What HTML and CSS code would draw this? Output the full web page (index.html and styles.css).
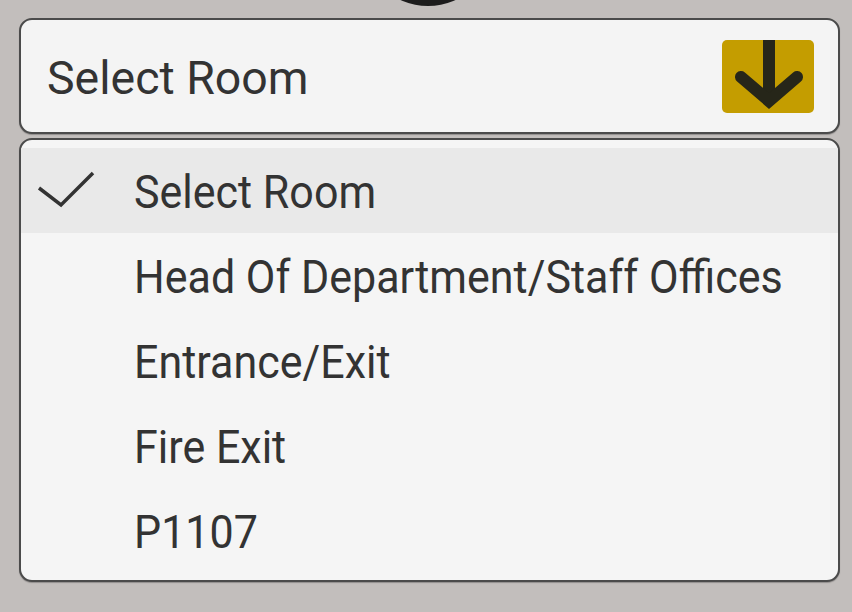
FILE: index.html
```html
<!DOCTYPE html>
<html>
<head>
<meta charset="utf-8">
<link rel="stylesheet" href="styles.css">
</head>
<body>
<div class="screen">
  <div class="top-strip"><div class="knob"></div></div>
  <div class="select">
    <span class="select-label">Select Room</span>
    <div class="select-btn">
      <svg width="92" height="73" viewBox="0 0 92 73">
        <path d="M47 0 V58" stroke="#262619" stroke-width="12" fill="none"/>
        <path d="M19 37 L47 61 L75 37" stroke="#262619" stroke-width="12" fill="none" stroke-linecap="round" stroke-linejoin="miter"/>
      </svg>
    </div>
  </div>
  <div class="menu">
    <div class="item selected">
      <span class="check">
        <svg width="60" height="40" viewBox="0 0 60 40">
          <path d="M2 17 L24 34 L56 2" stroke="#333" stroke-width="3.5" fill="none"/>
        </svg>
      </span>
      <span class="label">Select Room</span>
    </div>
    <div class="item"><span class="check"></span><span class="label">Head Of Department/Staff Offices</span></div>
    <div class="item"><span class="check"></span><span class="label">Entrance/Exit</span></div>
    <div class="item"><span class="check"></span><span class="label">Fire Exit</span></div>
    <div class="item"><span class="check"></span><span class="label">P1107</span></div>
  </div>
</div>
</body>
</html>
```
FILE: styles.css
```css
html, body {
  margin: 0;
  padding: 0;
}
body {
  background: #c2bebc;
  width: 852px;
  height: 612px;
  overflow: hidden;
  font-family: Roboto, "Noto Sans", sans-serif;
  color: #333;
}
.screen {
  display: flex;
  flex-direction: column;
}
.top-strip {
  height: 18px;
  display: flex;
  justify-content: center;
  overflow: hidden;
}
.knob {
  width: 132px;
  height: 132px;
  border-radius: 50%;
  background: #1c1c1c;
  margin-top: -126px;
  margin-left: 4px;
  flex: none;
}
.select {
  margin: 0 12px 0 19px;
  height: 116px;
  box-sizing: border-box;
  border: 2px solid #4b4b4b;
  border-radius: 13px;
  background: #f4f4f4;
  display: flex;
  align-items: center;
  justify-content: space-between;
  padding: 0 24px 0 26px;
  box-shadow: 0 1px 1px rgba(0,0,0,0.25);
}
.select-label {
  font-size: 46px;
  transform: scaleX(1.01);
  transform-origin: left center;
  margin-top: 4px;
}
.select-btn {
  width: 92px;
  height: 73px;
  background: #c49d00;
  border-radius: 5px;
  margin-top: 1px;
  display: flex;
}
.menu {
  margin: 4px 12px 0 19px;
  height: 444px;
  box-sizing: border-box;
  border: 2px solid #4b4b4b;
  border-radius: 13px;
  background: #f5f5f5;
  padding-top: 8px;
  box-shadow: 0 1px 1px rgba(0,0,0,0.25);
  overflow: hidden;
}
.item {
  height: 85px;
  display: flex;
  align-items: center;
}
.item.selected {
  background: #e9e9e9;
}
.check {
  width: 113px;
  flex: none;
  display: flex;
  padding-left: 16px;
  box-sizing: border-box;
}
.label {
  font-size: 46px;
  transform: scaleX(0.935);
  transform-origin: left center;
  white-space: nowrap;
  margin-top: 2px;
}
```
